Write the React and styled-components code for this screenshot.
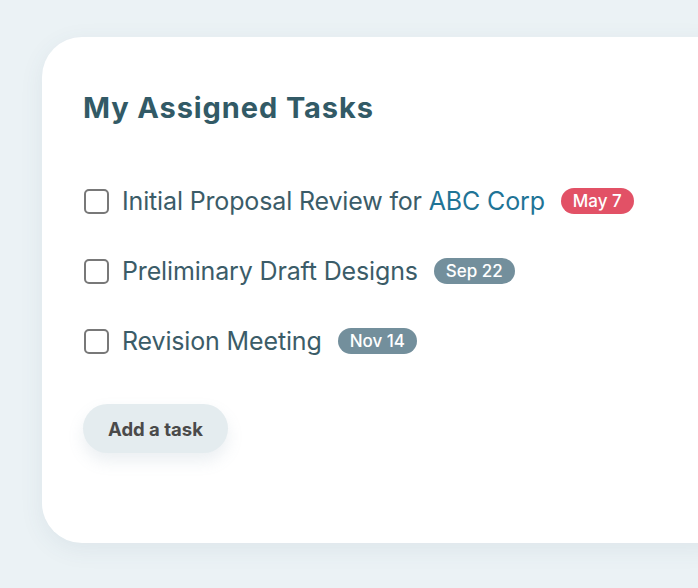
import React from 'react'
import styled, { createGlobalStyle } from 'styled-components'

const GlobalStyle = createGlobalStyle`
  html, body {
    margin: 0;
    padding: 0;
    background: #ebf2f5;
    overflow: hidden;
  }
  body {
    font-family: "Inter", "Noto Sans", sans-serif;
  }
`

const tasks = [
  { id: 1, title: 'Initial Proposal Review for ', link: 'ABC Corp', date: 'May 7', overdue: true },
  { id: 2, title: 'Preliminary Draft Designs', date: 'Sep 22' },
  { id: 3, title: 'Revision Meeting', date: 'Nov 14' },
]

const App = () => {
  return (
    <Page>
      <GlobalStyle />
      <Card>
        <Title>My Assigned Tasks</Title>
        <TaskList>
          {tasks.map(task => (
            <TaskRow key={task.id}>
              <Checkbox type="checkbox" />
              <TaskText>
                {task.title}
                {task.link && <TaskLink href="#">{task.link}</TaskLink>}
              </TaskText>
              <DateBadge $overdue={task.overdue}>{task.date}</DateBadge>
            </TaskRow>
          ))}
        </TaskList>
        <AddButton>Add a task</AddButton>
      </Card>
    </Page>
  )
}

export default App

const Page = styled.div`
  width: 698px;
  height: 588px;
  padding: 37px 0 0 42px;
  box-sizing: border-box;
  overflow: hidden;
`

const Card = styled.section`
  width: 700px;
  height: 506px;
  box-sizing: border-box;
  background: #fff;
  border-radius: 40px;
  padding: 53px 0 0 41px;
  box-shadow: 0 6px 24px rgba(60, 90, 110, 0.08);
`

const Title = styled.h2`
  margin: 0;
  font-size: 29px;
  line-height: 36px;
  font-weight: 700;
  color: #325a66;
  letter-spacing: 0.9px;
`

const TaskList = styled.ul`
  list-style: none;
  margin: 58px 0 0;
  padding: 0;
  display: flex;
  flex-direction: column;
  gap: 36px;
`

const TaskRow = styled.li`
  display: flex;
  align-items: center;
  height: 34px;
`

const Checkbox = styled.input`
  appearance: none;
  margin: 0 13px 0 1px;
  width: 25px;
  height: 25px;
  box-sizing: border-box;
  border: 2px solid #787878;
  border-radius: 5px;
  background: #fff;
`

const TaskText = styled.span`
  font-size: 25px;
  font-weight: 400;
  letter-spacing: -0.15px;
  color: #3b5c68;
`

const TaskLink = styled.a`
  color: #1f7496;
  text-decoration: none;
`

const DateBadge = styled.span`
  margin-left: 16px;
  height: 26px;
  padding: 0 12px;
  display: inline-flex;
  align-items: center;
  border-radius: 13px;
  font-size: 17px;
  font-weight: 500;
  color: #fff;
  background: ${p => (p.$overdue ? '#e25166' : '#738f9c')};
`

const AddButton = styled.button`
  margin-top: 46px;
  height: 49px;
  padding: 0 25px;
  border: none;
  border-radius: 25px;
  background: #e4ecef;
  font-family: inherit;
  font-size: 18.5px;
  font-weight: 700;
  color: #4a4a4a;
  box-shadow: 0 8px 16px rgba(120, 150, 165, 0.15);
`
